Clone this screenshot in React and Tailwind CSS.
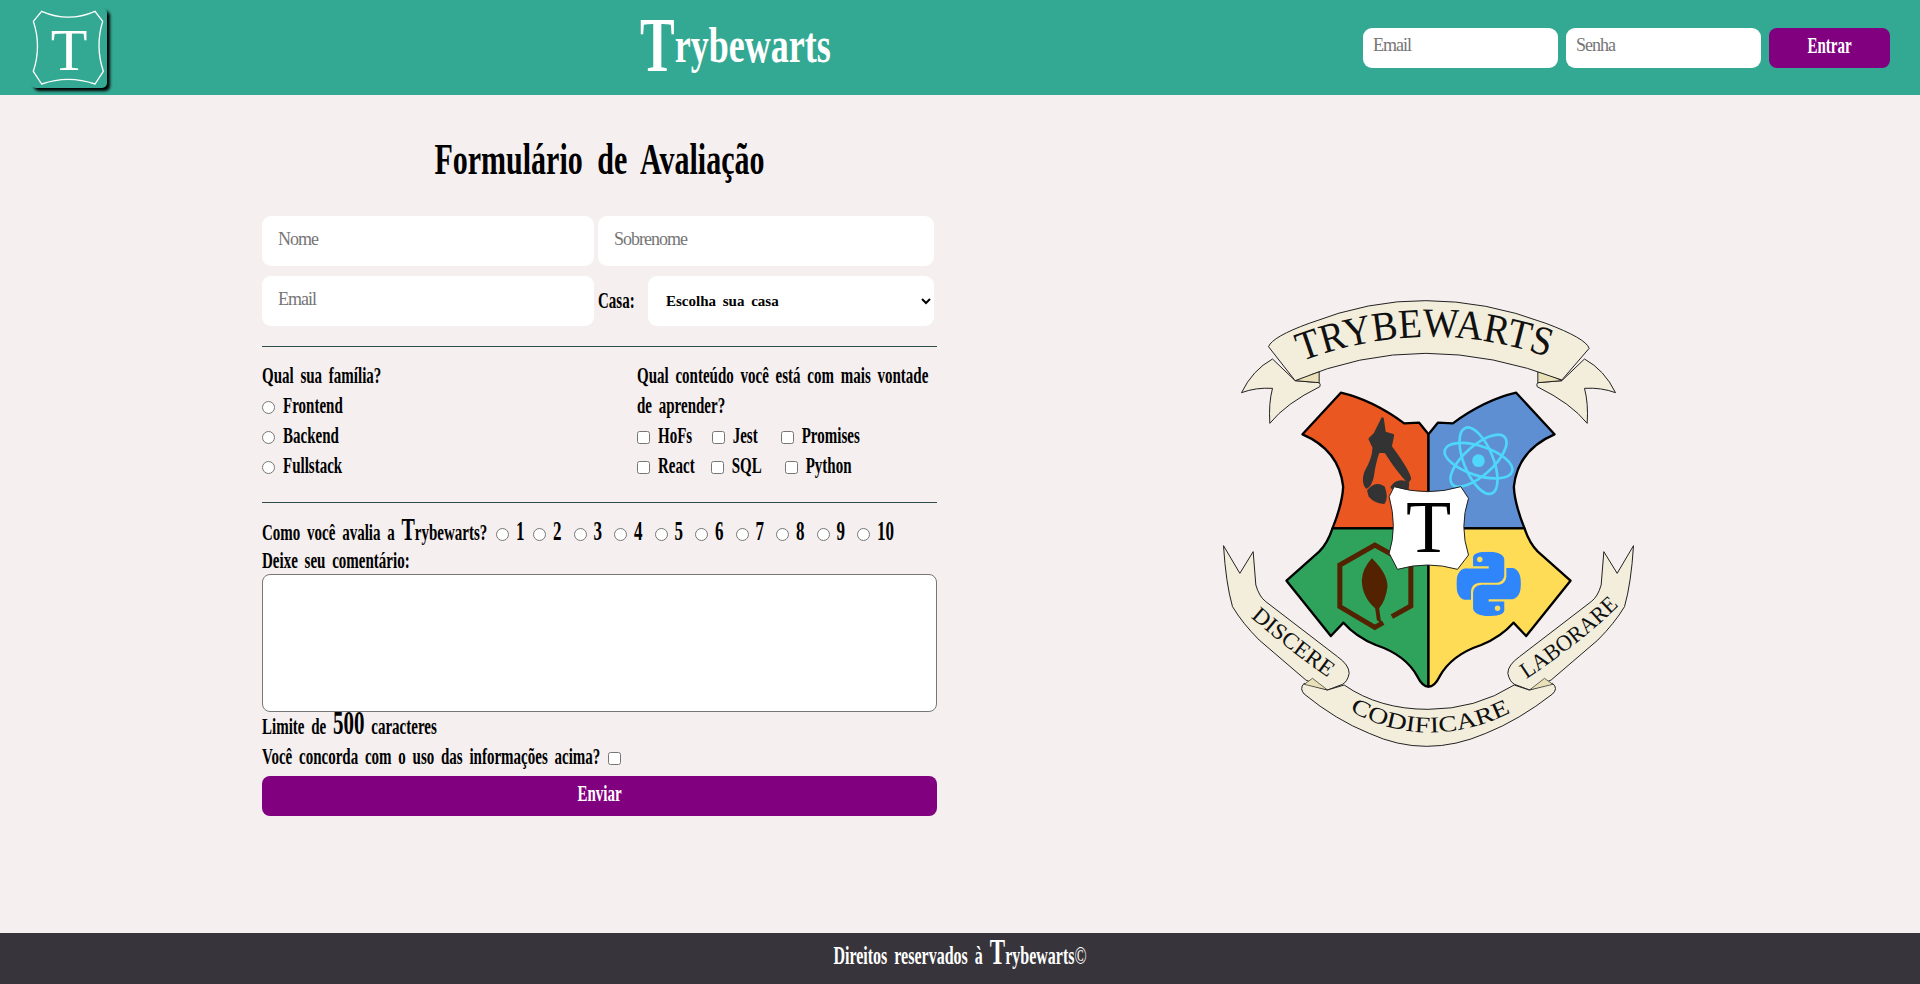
import { SiPython } from 'react-icons/si';

const SERIF = "[font-family:'Liberation_Serif',serif]";

// tall condensed lettering: the text keeps its width and is only stretched upward
function Tall({ children, className = '' }) {
  return (
    <span className={`inline-block scale-y-[1.6] -translate-y-px whitespace-nowrap font-bold text-[15px] [word-spacing:3px] ${className}`}>
      {children}
    </span>
  );
}

function BigT({ className = '' }) {
  return <span className={`leading-[0] ${className}`}>T</span>;
}

function Logo() {
  return (
    <div className="w-[76px] h-[80px] rounded-[5px] shadow-[3px_3px_3px_#000] bg-[#33a993]">
      <svg viewBox="93 15 228 240" className="w-full h-full">
        <path
          d="M125 25 Q205 60 285 25 L308 55 Q285 130 310 205 L285 243 Q205 215 125 243 L100 205 Q125 130 100 55 Z"
          fill="none"
          stroke="#fff"
          strokeWidth="4"
        />
        <text x="207" y="200" textAnchor="middle" fontSize="180" fill="#fff" fontFamily="Liberation Serif, serif">
          T
        </text>
      </svg>
    </div>
  );
}

const TAIL = 'M190 207 Q130 240 97 308 Q140 292 190 295 Q178 340 182 400 Q230 340 332 290 Q335 282 330 278 L258 272 Z';
const TAIL_FOLD = 'M258 272 Q295 250 330 245 L330 278 Z';
const LOWER_TAIL =
  'M43 767 L92 850 L132 785 L140 885 Q150 920 170 935 L385 1100 Q420 1125 420 1150 Q415 1175 400 1183 L355 1200 L290 1170 L150 1050 Q100 1000 70 950 Q50 880 43 767 Z';
const TOP_HALF = 'M395 308 Q490 330 585 400 L630 398 L658 433 L658 715 L370 715 Q400 640 402 590 Q390 480 280 433 Z';
const BOTTOM_HALF =
  'M370 715 Q355 760 330 785 L232 872 L365 1038 L403 998 Q440 1040 500 1065 Q590 1095 625 1160 Q640 1190 658 1190 L658 715 Z';
const MIRROR = 'translate(1316 0) scale(-1 1)';

function Crest() {
  const cream = '#f2eedb';
  const fold = '#e9e0b8';
  return (
    <svg viewBox="0 0 1316 1410" className="w-[439px] h-[470px]" fontFamily="Liberation Serif, serif">
      <defs>
        <path id="arc-top" d="M268 218 Q650 70 1026 205" />
        <path id="arc-mid" d="M422 1262 Q650 1390 905 1268" />
        <path id="arc-left" d="M128 985 Q230 1073 352 1160" />
        <path id="arc-right" d="M953 1166 Q1110 1063 1228 948" />
      </defs>

      {/* top banner */}
      {[undefined, MIRROR].map((t, i) => (
        <g key={i} transform={t}>
          <path d={TAIL} fill={cream} stroke="#222" strokeWidth="3" />
          <path d={TAIL_FOLD} fill={fold} stroke="#222" strokeWidth="3" />
        </g>
      ))}
      <path
        d="M178 170 Q190 140 300 100 Q480 30 650 32 Q830 32 1010 100 Q1130 145 1140 175 L1058 270 Q850 190 650 190 Q450 190 258 272 Z"
        fill={cream}
        stroke="#222"
        strokeWidth="3"
      />
      <text fontSize="124" fill="#111">
        <textPath href="#arc-top" startOffset="50%" textAnchor="middle" textLength="755" lengthAdjust="spacingAndGlyphs">
          TRYBEWARTS
        </textPath>
      </text>

      {/* shield */}
      <g stroke="#000" strokeWidth="7" strokeLinejoin="round">
        <path d={TOP_HALF} fill="#ea5720" />
        <path d={TOP_HALF} fill="#5f8fd3" transform={MIRROR} />
        <path d={BOTTOM_HALF} fill="#2fa35c" />
        <path d={BOTTOM_HALF} fill="#fedc56" transform={MIRROR} />
      </g>

      {/* penguin */}
      <g fill="#333" stroke="#333" strokeWidth="8" strokeLinejoin="round">
        <path d="M520 386 L526 428 L551 436 L544 470 Q596 540 602 566 L596 574 Q560 535 530 486 L508 484 Q496 515 490 560 Q484 586 472 592 Q460 575 469 547 Q494 505 494 472 L482 447 L497 432 Z" />
        <path d="M478 602 Q500 576 523 592 Q534 620 524 638 Q497 636 482 618 Z" />
        <path d="M548 592 Q565 566 596 580 L594 606 L557 598 Z" />
      </g>

      {/* atom */}
      <g fill="none" stroke="#4fd6fb" strokeWidth="8">
        <ellipse cx="808" cy="512" rx="106" ry="44" transform="rotate(18 808 512)" />
        <ellipse cx="808" cy="512" rx="106" ry="44" transform="rotate(68 808 512)" />
        <ellipse cx="808" cy="512" rx="106" ry="44" transform="rotate(-42 808 512)" />
      </g>
      <circle cx="808" cy="512" r="19" fill="#4fd6fb" />

      {/* leaf */}
      <path
        d="M548 980 L605 948 L605 825 L497 765 L392 825 L392 950 L497 1012 L522 998"
        fill="none"
        stroke="#532200"
        strokeWidth="15"
      />
      <path
        d="M488 805 Q535 850 535 890 Q530 930 510 955 L516 1000 L503 990 L498 955 Q458 920 458 870 Q460 835 488 805 Z"
        fill="#532200"
      />

      {/* snake */}
      <SiPython x="742" y="785" size="193" color="#2f86fb" />

      {/* T badge */}
      <path
        d="M555 590 Q655 620 755 590 L778 625 Q750 710 778 795 L745 838 Q655 812 565 838 L540 790 Q565 710 540 620 Z"
        fill="#fff"
        stroke="#222"
        strokeWidth="3"
      />
      <text x="658" y="785" textAnchor="middle" fontSize="222" fill="#000">
        T
      </text>

      {/* lower ribbons */}
      <path d={LOWER_TAIL} fill={cream} stroke="#222" strokeWidth="3" />
      <path d={LOWER_TAIL} fill={cream} stroke="#222" strokeWidth="3" transform={MIRROR} />
      <path
        d="M285 1180 Q270 1195 285 1212 Q380 1290 480 1330 Q650 1408 830 1330 Q930 1290 1030 1212 Q1048 1195 1030 1180 L960 1200 L915 1185 Q800 1258 657 1258 Q510 1258 405 1185 L355 1200 Z"
        fill={cream}
        stroke="#222"
        strokeWidth="3"
      />
      <path d="M310 1165 L355 1200 L285 1183 Z" fill={fold} stroke="#222" strokeWidth="2" />
      <path d="M1006 1165 L961 1200 L1031 1183 Z" fill={fold} stroke="#222" strokeWidth="2" />

      <text fontSize="68" fill="#111">
        <textPath href="#arc-mid" startOffset="50%" textAnchor="middle" textLength="505" lengthAdjust="spacingAndGlyphs">
          CODIFICARE
        </textPath>
      </text>
      <text fontSize="68" fill="#111">
        <textPath href="#arc-left" startOffset="50%" textAnchor="middle" textLength="295" lengthAdjust="spacingAndGlyphs">
          DISCERE
        </textPath>
      </text>
      <text fontSize="68" fill="#111">
        <textPath href="#arc-right" startOffset="50%" textAnchor="middle" textLength="355" lengthAdjust="spacingAndGlyphs">
          LABORARE
        </textPath>
      </text>
    </svg>
  );
}

function Option({ type = 'radio', name, label, className = '' }) {
  return (
    <label className={`flex items-center gap-2 h-[30px] ${className}`}>
      <input type={type} name={name} className="m-0 w-[13px] h-[13px] translate-y-px" />
      <Tall>{label}</Tall>
    </label>
  );
}

const inputClass =
  'bg-white rounded-[9px] outline-none text-[18px] tracking-[-1px] placeholder:text-[#757575] pb-1';

export default function App() {
  const ratings = ['1', '2', '3', '4', '5', '6', '7', '8', '9', '10'];
  return (
    <div className={`min-h-screen flex flex-col bg-[#f5efef] text-black ${SERIF}`}>
      <header className="h-[95px] shrink-0 bg-[#33a993] flex items-center justify-between pl-[31px] pr-[30px]">
        <Logo />
        <div className="w-[190px] text-white mb-1.5">
          <span className="inline-flex items-center whitespace-nowrap font-bold">
            <span className="inline-block scale-y-[1.5] text-[52px]">T</span>
            <span className="inline-block scale-y-[1.4] text-[36px]">rybewarts</span>
          </span>
        </div>
        <form className="flex gap-2">
          <input placeholder="Email" className={`${inputClass} w-[195px] h-10 px-2.5`} />
          <input placeholder="Senha" className={`${inputClass} w-[195px] h-10 px-2.5`} />
          <button type="button" className="w-[121px] h-10 pb-1 rounded-[8px] bg-[#800080] text-white">
            <Tall className="text-[14.5px]">Entrar</Tall>
          </button>
        </form>
      </header>

      <main className="flex-1 flex">
        <form className="ml-[262px] w-[675px] shrink-0">
          <h1 className="mt-[39px] pb-0.5 h-[50px] flex items-center justify-center">
            <span className="inline-block scale-y-[1.5] whitespace-nowrap font-bold text-[30px] [word-spacing:7px]">
              Formulário de Avaliação
            </span>
          </h1>

          <div className="mt-8 flex gap-1">
            <input placeholder="Nome" className={`${inputClass} w-[332px] h-[50px] px-4`} />
            <input placeholder="Sobrenome" className={`${inputClass} w-[336px] h-[50px] px-4`} />
          </div>
          <div className="mt-2.5 flex items-center">
            <input placeholder="Email" className={`${inputClass} w-[332px] h-[50px] px-4`} />
            <label className="ml-1 w-[50px]">
              <Tall className="text-[15.5px]">Casa:</Tall>
            </label>
            <select className="w-[286px] h-[50px] rounded-[9px] bg-white pl-[14px] text-[15px] font-bold [word-spacing:3px]">
              <option>Escolha sua casa</option>
            </select>
          </div>

          <hr className="mt-5 border-[#2f4f4f]" />

          <div className="mt-3.5 flex">
            <div className="w-[375px]">
              <div className="h-[30px] flex items-center">
                <Tall className="text-[15.8px]">Qual sua família?</Tall>
              </div>
              <Option name="family" label="Frontend" />
              <Option name="family" label="Backend" />
              <Option name="family" label="Fullstack" />
            </div>
            <div className="flex-1">
              <div className="h-[30px] flex items-center">
                <Tall>Qual conteúdo você está com mais vontade</Tall>
              </div>
              <div className="h-[30px] flex items-center">
                <Tall>de aprender?</Tall>
              </div>
              <div className="flex">
                <Option type="checkbox" label="HoFs" className="mr-[19.5px]" />
                <Option type="checkbox" label="Jest" className="mr-[23px]" />
                <Option type="checkbox" label="Promises" />
              </div>
              <div className="flex">
                <Option type="checkbox" label="React" className="mr-4" />
                <Option type="checkbox" label="SQL" className="mr-[23px]" />
                <Option type="checkbox" label="Python" />
              </div>
            </div>
          </div>

          <hr className="mt-[21px] border-[#2f4f4f]" />

          <div className="mt-[15px] h-[30px] flex items-center">
            <div className="w-[234px]">
              <Tall>
                Como você avalia a <BigT className="text-[20px]" />
                rybewarts?
              </Tall>
            </div>
            {ratings.map((r) => (
              <label key={r} className={`flex items-center gap-[7px] ${r === '1' ? 'w-[37px]' : 'w-[40.5px]'}`}>
                <input type="radio" name="rate" className="m-0 w-[13px] h-[13px] translate-y-px" />
                <Tall className="text-[17px]">{r}</Tall>
              </label>
            ))}
          </div>

          <div className="h-[26px] flex items-center">
            <Tall className="text-[15.5px]">Deixe seu comentário:</Tall>
          </div>
          <textarea className="block w-full h-[138px] rounded-[8px] border border-[#767676] bg-white resize-none" />

          <div className="h-[30px] flex items-center">
            <Tall className="text-[15.8px]">
              Limite de <span className="text-[21px] leading-[0]">500</span> caracteres
            </Tall>
          </div>
          <label className="h-[30px] flex items-center gap-2">
            <Tall className="text-[15.5px]">Você concorda com o uso das informações acima?</Tall>
            <input type="checkbox" className="m-0 w-[13px] h-[13px] translate-y-px" />
          </label>

          <button type="button" className="mt-1 w-full h-10 pb-1 rounded-[8px] bg-[#800080] text-white">
            <Tall>Enviar</Tall>
          </button>
        </form>

        <section className="flex-1 flex justify-center pt-[195px]">
          <Crest />
        </section>
      </main>

      <footer className="h-[51px] shrink-0 bg-[#37353b] text-white flex items-center justify-center pb-1">
        <Tall className="text-[16px]">
          Direitos reservados à <BigT className="text-[23px]" />
          rybewarts
          <span className="font-normal">©</span>
        </Tall>
      </footer>
    </div>
  );
}
